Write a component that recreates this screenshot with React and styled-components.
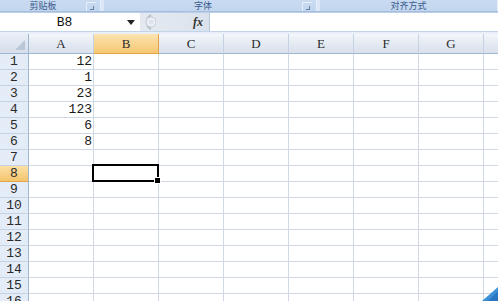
import React from 'react';
import styled, { createGlobalStyle } from 'styled-components';

const GlobalStyle = createGlobalStyle`
  html, body {
    margin: 0;
    padding: 0;
    background: #ffffff;
  }
`;

const COLS = ['A', 'B', 'C', 'D', 'E', 'F', 'G', 'H'];
const ROWS = 16;
const VALUES = { 1: '12', 2: '1', 3: '23', 4: '123', 5: '6', 6: '8' };
const SEL_COL = 'B';
const SEL_ROW = 8;

const Window = styled.div`
  position: relative;
  width: 498px;
  height: 301px;
  overflow: hidden;
  background: #ffffff;
  display: flex;
  flex-direction: column;
  font-family: "Liberation Mono", "DejaVu Sans Mono", monospace;
  & > * {
    flex-shrink: 0;
  }
`;

// ribbon group labels strip
const Ribbon = styled.div`
  height: 11px;
  display: flex;
  gap: 3px;
  background: #dbe7f6;
  overflow: hidden;
`;

const Group = styled.div`
  width: ${(p) => p.$width}px;
  flex: ${(p) => (p.$grow ? 1 : 'none')};
  display: flex;
  align-items: center;
  background: linear-gradient(#c9dbf1, #c2d6ef);
  border-right: 1px solid #e6eef9;
`;

const GroupLabel = styled.div`
  flex: 1;
  text-align: center;
  font-family: "Noto Sans CJK SC", sans-serif;
  font-size: 9px;
  line-height: 11px;
  color: #3a5a8c;
`;

const Launcher = styled.div`
  width: 9px;
  height: 8px;
  margin: 2px 4px 0 0;
  border-left: 1px solid #e8f0fa;
  border-top: 1px solid #e8f0fa;
  position: relative;
  &:after {
    content: '';
    position: absolute;
    right: 2px;
    bottom: 1px;
    width: 3px;
    height: 3px;
    border-right: 1px solid #6a82a8;
    border-bottom: 1px solid #6a82a8;
  }
`;

const RibbonEdge = styled.div`
  height: 2px;
  background: linear-gradient(#9ab4d8, #c8d9ee);
`;

const FormulaBar = styled.div`
  height: 18px;
  display: flex;
  background: #ffffff;
  border-bottom: 1px solid #c3d3e8;
`;

const NameBox = styled.div`
  width: 140px;
  display: flex;
  align-items: center;
  font-size: 13px;
  color: #111;
`;

const NameText = styled.span`
  flex: 1;
  text-align: center;
  padding-left: 2px;
`;

const DropArrow = styled.span`
  width: 0;
  height: 0;
  margin-right: 5px;
  border-left: 4px solid transparent;
  border-right: 4px solid transparent;
  border-top: 5px solid #222;
`;

const FxPanel = styled.div`
  width: 70px;
  display: flex;
  align-items: center;
  justify-content: space-between;
  padding: 0 6px 0 0;
  box-sizing: border-box;
  background: linear-gradient(90deg, #e4e9f0, #dfe6ef 60%, #d9e1ec);
  border-right: 1px solid #b7c6da;
`;

const FxText = styled.span`
  font-family: "Liberation Serif", serif;
  font-style: italic;
  font-weight: bold;
  font-size: 12px;
  color: #333;
`;

const FormulaInput = styled.div`
  flex: 1;
  background: #ffffff;
`;

const Spacer = styled.div`
  height: 2px;
  background: #e9eff8;
`;

const Grid = styled.div`
  display: grid;
  grid-template-columns: 29px repeat(8, 65px);
  grid-template-rows: 20px;
  grid-auto-rows: 16px;
`;

const Corner = styled.div`
  position: relative;
  background: linear-gradient(#e9eef6, #d5deea);
  border-right: 1px solid #9eb6ce;
  border-bottom: 1px solid #9eb6ce;
  box-sizing: border-box;
  &:after {
    content: '';
    position: absolute;
    right: 3px;
    bottom: 3px;
    width: 0;
    height: 0;
    border-left: 10px solid transparent;
    border-bottom: 10px solid #b9c6d6;
  }
`;

const ColHead = styled.div`
  display: flex;
  align-items: center;
  justify-content: center;
  box-sizing: border-box;
  font-family: "Liberation Serif", serif;
  font-size: 13px;
  color: #2a2a2a;
  padding-top: 1px;
  border-right: 1px solid ${(p) => (p.$active ? '#e2a44a' : '#c5d2e3')};
  border-bottom: 1px solid ${(p) => (p.$active ? '#e2a44a' : '#9eb6ce')};
  background: ${(p) =>
    p.$active
      ? 'linear-gradient(#fbe3b0, #f7c873)'
      : 'linear-gradient(#f4f7fb, #e3e9f2 55%, #d9e1ec)'};
`;

const RowHead = styled.div`
  display: flex;
  align-items: center;
  justify-content: center;
  box-sizing: border-box;
  font-size: 13px;
  color: #2a2a2a;
  border-right: 1px solid #9eb6ce;
  border-bottom: 1px solid ${(p) => (p.$active ? '#e2a44a' : '#c5d2e3')};
  background: ${(p) =>
    p.$active ? 'linear-gradient(#fbe0a6, #f5c46c)' : '#e4ecf7'};
`;

const Cell = styled.div`
  position: relative;
  display: flex;
  align-items: center;
  justify-content: flex-end;
  box-sizing: border-box;
  padding-right: 1px;
  font-size: 13px;
  color: #1a1a1a;
  border-right: 1px solid #d0d7e5;
  border-bottom: 1px solid #d0d7e5;
`;

const Selection = styled.div`
  position: absolute;
  left: -2px;
  top: -2px;
  right: -1px;
  bottom: -1px;
  border: 2px solid #000;
  z-index: 2;
  &:after {
    content: '';
    position: absolute;
    right: -4px;
    bottom: -4px;
    width: 5px;
    height: 5px;
    background: #000;
    border: 1px solid #fff;
  }
`;

const CornerMark = styled.svg`
  position: absolute;
  right: 0;
  bottom: 0;
`;

const RibbonGroups = () => (
  <Ribbon>
    <Group $width={100}>
      <GroupLabel>剪贴板</GroupLabel>
      <Launcher />
    </Group>
    <Group $width={212}>
      <GroupLabel>字体</GroupLabel>
      <Launcher />
    </Group>
    <Group $grow>
      <GroupLabel>对齐方式</GroupLabel>
    </Group>
  </Ribbon>
);

const FxButton = () => (
  <svg width="16" height="18" viewBox="0 0 16 18">
    <path d="M11 2 A8 8 0 0 0 11 16" fill="none" stroke="#b6bec9" strokeWidth="2" />
    <circle cx="11" cy="9" r="5" fill="#eef1f5" stroke="#c3cad4" />
    <circle cx="11" cy="9" r="2.5" fill="#dde3ea" />
  </svg>
);

export default function App() {
  const rows = Array.from({ length: ROWS }, (_, i) => i + 1);
  return (
    <>
      <GlobalStyle />
      <Window>
        <RibbonGroups />
        <RibbonEdge />
        <FormulaBar>
          <NameBox>
            <NameText>B8</NameText>
            <DropArrow />
          </NameBox>
          <FxPanel>
            <FxButton />
            <FxText>fx</FxText>
          </FxPanel>
          <FormulaInput />
        </FormulaBar>
        <Spacer />
        <Grid>
          <Corner />
          {COLS.map((c) => (
            <ColHead key={c} $active={c === SEL_COL}>
              {c}
            </ColHead>
          ))}
          {rows.map((r) => (
            <React.Fragment key={r}>
              <RowHead $active={r === SEL_ROW}>{r}</RowHead>
              {COLS.map((c) => (
                <Cell key={c}>
                  {c === 'A' && VALUES[r]}
                  {c === SEL_COL && r === SEL_ROW && <Selection />}
                </Cell>
              ))}
            </React.Fragment>
          ))}
        </Grid>
        <CornerMark width="20" height="14" viewBox="0 0 20 14">
          <polygon points="20,0 20,14 4,14" fill="#3d8fd6" />
          <polygon points="20,4 20,14 10,14" fill="#2a76c2" />
        </CornerMark>
      </Window>
    </>
  );
}
